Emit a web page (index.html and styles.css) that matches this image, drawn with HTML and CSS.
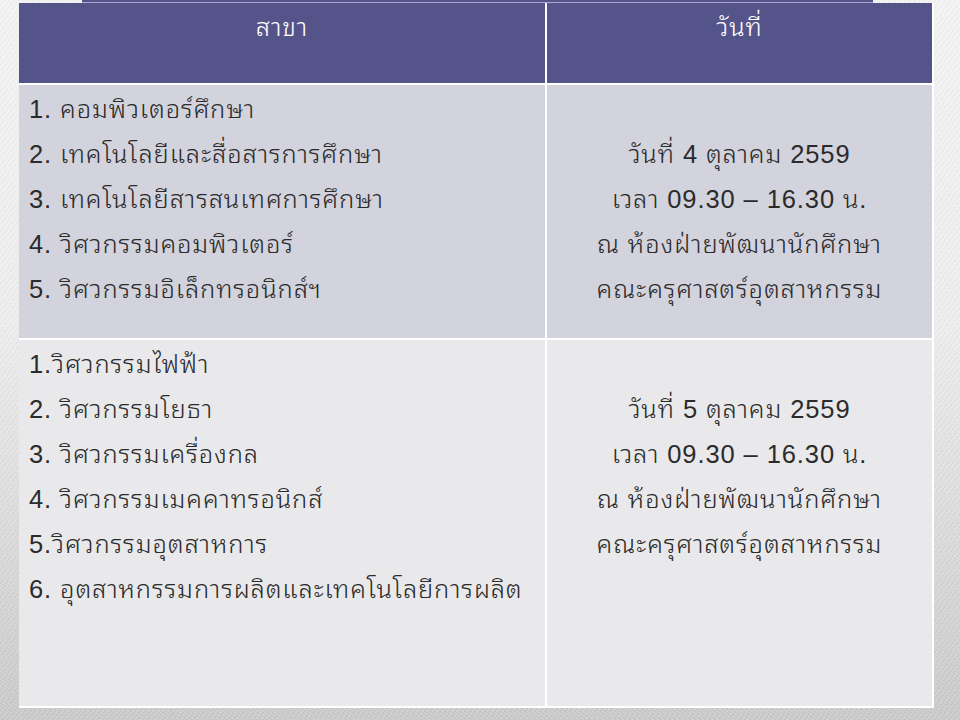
FILE: index.html
```html
<!DOCTYPE html>
<html lang="th">
<head>
<meta charset="utf-8">
<title>ตารางวันที่</title>
<link rel="stylesheet" href="styles.css">
</head>
<body>
<div class="slide">
  <div class="topbar"></div>
  <table class="sched">
    <colgroup><col class="c1"><col class="c2"></colgroup>
    <thead>
      <tr><th>สาขา</th><th>วันที่</th></tr>
    </thead>
    <tbody>
      <tr class="r1">
        <td class="list">
          <div>1. คอมพิวเตอร์ศึกษา</div>
          <div>2. เทคโนโลยีและสื่อสารการศึกษา</div>
          <div>3. เทคโนโลยีสารสนเทศการศึกษา</div>
          <div>4. วิศวกรรมคอมพิวเตอร์</div>
          <div>5. วิศวกรรมอิเล็กทรอนิกส์ฯ</div>
        </td>
        <td class="when">
          <div>&nbsp;</div>
          <div>วันที่ 4 ตุลาคม 2559</div>
          <div>เวลา 09.30 – 16.30 น.</div>
          <div>ณ ห้องฝ่ายพัฒนานักศึกษา</div>
          <div>คณะครุศาสตร์อุตสาหกรรม</div>
        </td>
      </tr>
      <tr class="r2">
        <td class="list">
          <div>1.วิศวกรรมไฟฟ้า</div>
          <div>2. วิศวกรรมโยธา</div>
          <div>3. วิศวกรรมเครื่องกล</div>
          <div>4. วิศวกรรมเมคคาทรอนิกส์</div>
          <div>5.วิศวกรรมอุตสาหการ</div>
          <div>6. อุตสาหกรรมการผลิตและเทคโนโลยีการผลิต</div>
        </td>
        <td class="when">
          <div>&nbsp;</div>
          <div>วันที่ 5 ตุลาคม 2559</div>
          <div>เวลา 09.30 – 16.30 น.</div>
          <div>ณ ห้องฝ่ายพัฒนานักศึกษา</div>
          <div>คณะครุศาสตร์อุตสาหกรรม</div>
        </td>
      </tr>
    </tbody>
  </table>
</div>
</body>
</html>
```
FILE: styles.css
```css
html, body {
  margin: 0;
  padding: 0;
}
body {
  width: 960px;
  height: 720px;
  overflow: hidden;
  font-family: "Liberation Sans", "Noto Sans Thai Looped", "Loma", "Garuda", "Noto Sans Thai", "Noto Sans", "DejaVu Sans", sans-serif;
  background:
    repeating-linear-gradient(37deg, rgba(255,255,255,0.18) 0 1px, rgba(0,0,0,0) 1px 3px),
    repeating-linear-gradient(-53deg, rgba(0,0,0,0.04) 0 1px, rgba(0,0,0,0) 1px 4px),
    linear-gradient(180deg, #f3f3f3 0%, #ededed 45%, #d6d6d6 80%, #c9c9c9 100%);
}
.slide {
  position: relative;
  width: 960px;
  height: 720px;
  padding: 0 0 0 19px;
  box-sizing: border-box;
}
.topbar {
  height: 2px;
  margin-left: 63px;
  width: 791px;
  background: #55548a;
  border-bottom: 1px solid #a9a8d0;
}
.sched {
  border-collapse: collapse;
  width: 914px;
  table-layout: fixed;
  color: #2b2b2b;
  font-size: 25.5px;
  font-weight: 350;
  letter-spacing: 0.9px;
  line-height: 45px;
}
.c1 { width: 527px; }
.c2 { width: 387px; }
.sched th,
.sched td {
  border: 2px solid #ffffff;
  vertical-align: top;
  padding: 2px 10px 0 10px;
}
.sched tr:first-child th { border-top: 0; }
.sched th:first-child,
.sched td:first-child { border-left: 0; }
.sched thead tr {
  height: 81px;
}
.sched th {
  background: #55548a;
  color: #ffffff;
  font-weight: 350;
  text-align: center;
}
.r1 { height: 255px; }
.r1 td { background: #d3d3de; }
.r2 { height: 368px; }
.r2 td { background: #e9e9eb; }
.list { text-align: left; }
.when { text-align: center; }
```
